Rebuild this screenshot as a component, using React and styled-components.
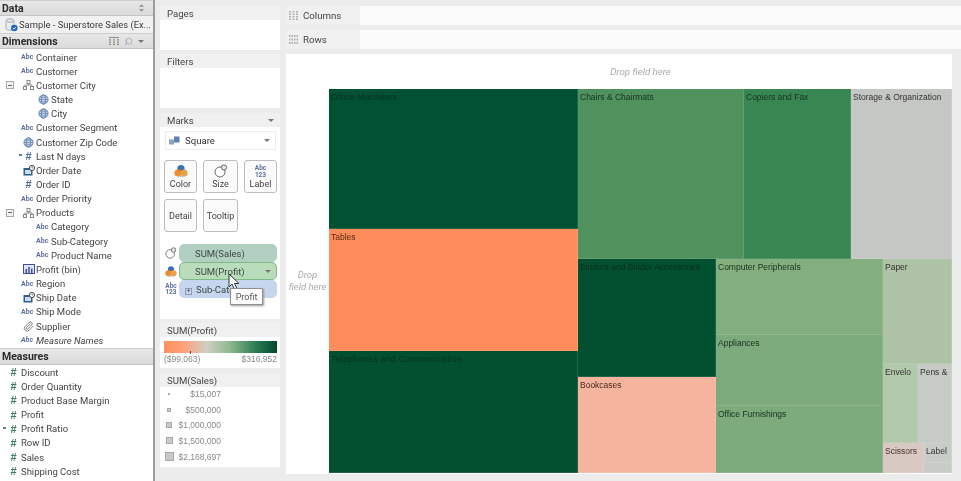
import React from "react";
import styled, { createGlobalStyle } from "styled-components";
import { Paperclip, Search } from "lucide-react";

const GlobalStyle = createGlobalStyle`
  html, body { margin: 0; padding: 0; background: #ececec; overflow: hidden; }
  * { box-sizing: border-box; }
`;

const dimensions = [
  { name: "Container", icon: "abc" },
  { name: "Customer", icon: "abc" },
  { name: "Customer City", icon: "tree", toggle: true },
  { name: "State", icon: "globe", nested: true },
  { name: "City", icon: "globe", nested: true },
  { name: "Customer Segment", icon: "abc" },
  { name: "Customer Zip Code", icon: "globe" },
  { name: "Last N days", icon: "hashBlue", calc: true },
  { name: "Order Date", icon: "date" },
  { name: "Order ID", icon: "hashBlue" },
  { name: "Order Priority", icon: "abc" },
  { name: "Products", icon: "tree", toggle: true },
  { name: "Category", icon: "abc", nested: true },
  { name: "Sub-Category", icon: "abc", nested: true },
  { name: "Product Name", icon: "abc", nested: true },
  { name: "Profit (bin)", icon: "bin" },
  { name: "Region", icon: "abc" },
  { name: "Ship Date", icon: "date" },
  { name: "Ship Mode", icon: "abc" },
  { name: "Supplier", icon: "clip" },
  { name: "Measure Names", icon: "abc", italic: true },
];

const measures = [
  { name: "Discount" },
  { name: "Order Quantity" },
  { name: "Product Base Margin" },
  { name: "Profit" },
  { name: "Profit Ratio", calc: true },
  { name: "Row ID" },
  { name: "Sales" },
  { name: "Shipping Cost" },
];

const sizes = [
  { label: "$15,007", box: 2 },
  { label: "$500,000", box: 4 },
  { label: "$1,000,000", box: 6 },
  { label: "$1,500,000", box: 7 },
  { label: "$2,168,697", box: 9 },
];

const Page = styled.div`
  width: 961px;
  height: 481px;
  display: flex;
  background: #ececec;
  font-family: Roboto, "Open Sans", sans-serif;
  color: #333;
  overflow: hidden;
  filter: blur(0.35px);
`;

const Sidebar = styled.aside`
  width: 155px;
  height: 481px;
  flex: none;
  background: #fff;
  border-right: 2px solid #9c9c9c;
  display: flex;
  flex-direction: column;
`;

const SideHeader = styled.div`
  height: ${(p) => p.$h}px;
  flex: none;
  display: flex;
  align-items: center;
  justify-content: space-between;
  padding: 0 9px 0 2px;
  background: linear-gradient(#e8e8e8, #dadada);
  border-top: 1px solid #cfcfcf;
  border-bottom: 1px solid #c4c4c4;
  font-size: 10.5px;
  font-weight: 700;
  color: #2b2b2b;
`;

const HeaderTools = styled.span`
  display: flex;
  align-items: center;
  gap: 5px;
  color: #8a8a8a;
`;

const FlippedSearch = styled(Search)`
  transform: scaleX(-1);
`;

const Source = styled.div`
  height: 17px;
  flex: none;
  display: flex;
  align-items: center;
  gap: 1px;
  padding-left: 5px;
  background: #f1f1f1;
  font-size: 9.4px;
  color: #3a3a3a;
  white-space: nowrap;
  overflow: hidden;

  svg {
    flex: none;
  }
`;

const FieldList = styled.div`
  display: flex;
  flex-direction: column;
  padding-top: ${(p) => p.$top}px;
  height: ${(p) => p.$h}px;
  flex: none;
  overflow: hidden;
`;

const Field = styled.div`
  height: 14.16px;
  flex: none;
  display: flex;
  align-items: center;
  padding-left: ${(p) => (p.$nested ? 36 : 21)}px;
  font-size: 9.5px;
  font-style: ${(p) => (p.$italic ? "italic" : "normal")};
  color: #444;
  white-space: nowrap;
  position: relative;
`;

const MeasureField = styled(Field)`
  padding-left: 6px;
`;

const IconSlot = styled.span`
  width: 15px;
  height: 12px;
  flex: none;
  display: flex;
  align-items: center;
  justify-content: ${(p) => (p.$left ? "flex-start" : "center")};
  position: relative;
`;

const AbcTag = styled.span`
  font-size: 7px;
  font-weight: 700;
  color: #5f6f9e;
`;

const Hash = styled.span`
  font-family: "Liberation Sans", sans-serif;
  font-size: 11px;
  font-weight: 700;
  color: ${(p) => (p.$blue ? "#4c6f9c" : "#3f7d61")};
`;

const CalcMark = styled.span`
  position: absolute;
  left: ${(p) => p.$left}px;
  top: 5px;
  width: 3px;
  height: 2px;
  background: #5d7f93;
`;

const Toggle = styled.span`
  position: absolute;
  left: 6px;
  top: 3px;
  width: 8px;
  height: 8px;
  border: 1px solid #aaa;
  background: #f2f2f2;
  &::after {
    content: "";
    position: absolute;
    left: 1px;
    top: 2.5px;
    width: 4px;
    height: 1px;
    background: #666;
  }
`;

const Shelves = styled.section`
  width: 131px;
  flex: none;
  display: flex;
  flex-direction: column;
  padding: 6px 0 0 5px;
`;

const Card = styled.div`
  width: 120px;
  height: ${(p) => p.$h}px;
  margin-bottom: ${(p) => p.$gap}px;
  flex: none;
  background: #fff;
  display: flex;
  flex-direction: column;
  position: relative;
`;

const CardTitle = styled.div`
  height: 14px;
  flex: none;
  background: #f0f0f0;
  display: flex;
  align-items: center;
  justify-content: space-between;
  padding: 0 6px 0 7px;
  font-size: 9.6px;
  color: #444;
`;

const Caret = styled.span`
  width: 0;
  height: 0;
  border-left: 3px solid transparent;
  border-right: 3px solid transparent;
  border-top: 3px solid #777;
`;

const MarkSelect = styled.div`
  margin: 4px 4px 0 5px;
  height: 19px;
  flex: none;
  background: #fff;
  border: 1px solid #ececec;
  display: flex;
  align-items: center;
  justify-content: space-between;
  padding: 0 5px 0 3px;
  font-size: 9.6px;
`;

const SelectLabel = styled.span`
  display: flex;
  align-items: center;
  gap: 5px;
`;

const MarkGrid = styled.div`
  display: grid;
  grid-template-columns: 33px 35px 33px;
  grid-auto-rows: 33px;
  column-gap: 6px;
  row-gap: 6px;
  margin: 10px 0 0 4px;
`;

const MarkButton = styled.div`
  border: 1px solid #bdbdbd;
  border-radius: 3px;
  background: #fbfbfb;
  display: flex;
  flex-direction: column;
  align-items: center;
  justify-content: ${(p) => (p.$plain ? "center" : "flex-end")};
  padding-bottom: ${(p) => (p.$plain ? 0 : 3)}px;
  font-size: 9px;
  color: #444;
  gap: 1px;
`;

const MarkStack = styled.div`
  display: flex;
  flex-direction: column;
  margin-top: 12px;
`;

const PillRow = styled.div`
  height: 18px;
  display: flex;
  align-items: center;
  padding: 0 3px 0 5px;
  gap: 2px;
`;

const PillIcon = styled.span`
  width: 12px;
  height: 14px;
  flex: none;
  display: flex;
  align-items: center;
  justify-content: center;
`;

const Pill = styled.div`
  flex: 1;
  height: 17.5px;
  border-radius: 5px;
  background: ${(p) => p.$bg};
  border: 1px solid ${(p) => p.$line || p.$bg};
  display: flex;
  align-items: center;
  justify-content: space-between;
  padding: 0 5px 0 ${(p) => p.$pad}px;
  font-size: 9.5px;
  color: #3d4a44;
  white-space: nowrap;
  overflow: hidden;
`;

const Plus = styled.span`
  width: 7px;
  height: 7px;
  border: 1px solid #8d9ab5;
  font-size: 7px;
  line-height: 5px;
  text-align: center;
  margin-right: 4px;
  display: inline-block;
`;

const Tooltip = styled.div`
  position: absolute;
  left: 70px;
  top: 175px;
  width: 33px;
  height: 17px;
  background: #fdfdfd;
  border: 1px solid #8f8f8f;
  box-shadow: 1px 1px 2px #9a9a9a;
  font-size: 9px;
  color: #555;
  display: flex;
  align-items: center;
  justify-content: center;
`;

const CursorArrow = styled.svg`
  position: absolute;
  left: 68px;
  top: 160px;
`;

const Gradient = styled.div`
  height: 12px;
  margin: 4px 3px 0 4px;
  background: linear-gradient(90deg, #ff8f5f 0%, #ffa27c 18%, #cfcfc4 38%, #8fba8f 58%, #2f8056 80%, #00482c 100%);
  position: relative;
`;

const Tick = styled.span`
  position: absolute;
  left: 26px;
  bottom: -1px;
  width: 1px;
  height: 3px;
  background: #555;
`;

const RangeRow = styled.div`
  display: flex;
  justify-content: space-between;
  margin: 1px 3px 0 4px;
  font-family: "Liberation Sans", sans-serif;
  font-size: 8.5px;
  color: #8a8a8a;
`;

const SizeList = styled.div`
  margin-top: -1px;
`;

const SizeRow = styled.div`
  height: 15.7px;
  display: grid;
  grid-template-columns: 10px 47px;
  padding-left: 4px;
  align-items: center;
  font-family: "Liberation Sans", sans-serif;
  font-size: 8.5px;
  color: #8a8a8a;
  text-align: right;
`;

const SizeSwatch = styled.span`
  justify-self: center;
  width: ${(p) => p.$box}px;
  height: ${(p) => p.$box}px;
  background: #c9c9c9;
  border: 1px solid #a8a8a8;
`;

const Main = styled.main`
  flex: 1;
  display: flex;
  flex-direction: column;
  padding-top: 6px;
  min-width: 0;
`;

const Shelf = styled.div`
  height: 19px;
  margin-bottom: 5px;
  flex: none;
  display: flex;
  background: #fbfbfb;
`;

const ShelfLabel = styled.div`
  width: 74px;
  flex: none;
  background: #f0f0f0;
  display: flex;
  align-items: center;
  gap: 5px;
  padding-left: 3px;
  font-size: 9.7px;
  color: #444;
`;

const Viz = styled.div`
  width: 666px;
  height: 420px;
  flex: none;
  background: #fff;
  display: grid;
  grid-template-columns: 43px 623px;
  grid-template-rows: 35px 384px;
`;

const ColDrop = styled.div`
  grid-column: 2;
  display: flex;
  align-items: center;
  justify-content: center;
  font-size: 9.7px;
  font-style: italic;
  color: #aaa;
`;

const RowDrop = styled.div`
  grid-row: 2;
  display: flex;
  align-items: center;
  justify-content: center;
  text-align: center;
  font-size: 9.5px;
  line-height: 12px;
  font-style: italic;
  color: #aaa;
`;

const Treemap = styled.div`
  grid-row: 2;
  grid-column: 2;
  display: flex;
`;

const Stack = styled.div`
  display: flex;
  flex-direction: ${(p) => (p.$row ? "row" : "column")};
  flex: ${(p) => (p.$size ? `0 0 ${p.$size}px` : "1")};
  min-width: 0;
  min-height: 0;
`;

const Tile = styled.div`
  flex: ${(p) => (p.$size ? `0 0 ${p.$size}px` : "1")};
  min-width: 0;
  min-height: 0;
  background: ${(p) => p.$bg};
  border-right: 1px solid rgba(255, 255, 255, 0.12);
  border-bottom: 1px solid rgba(255, 255, 255, 0.12);
  padding: 3px 0 0 2px;
  font-family: "Liberation Sans", sans-serif;
  font-size: 8.5px;
  line-height: 10px;
  letter-spacing: ${(p) => (p.$wide ? "0.35px" : "0")};
  color: ${(p) => p.$ink || "#17301f"};
  white-space: nowrap;
  overflow: hidden;
`;

function GlobeIcon() {
  return (
    <svg width="11" height="11" viewBox="0 0 12 12" fill="#c5d3ea" stroke="#6582ad" strokeWidth="1">
      <circle cx="6" cy="6" r="5" />
      <ellipse cx="6" cy="6" rx="2.3" ry="5" fill="none" />
      <path d="M1 6h10M1.8 3.5h8.4M1.8 8.5h8.4" fill="none" strokeWidth="0.8" />
    </svg>
  );
}

function TreeIcon() {
  return (
    <svg width="11" height="10" viewBox="0 0 11 10" fill="none" stroke="#888" strokeWidth="1">
      <rect x="4" y="0.5" width="3" height="3" />
      <rect x="0.5" y="6.5" width="3" height="3" />
      <rect x="7.5" y="6.5" width="3" height="3" />
      <path d="M5.5 3.5v1.5M2 6.5V5h7v1.5" />
    </svg>
  );
}

function DateIcon() {
  return (
    <svg width="12" height="11" viewBox="0 0 12 11">
      <rect x="0.5" y="3" width="9" height="7.5" fill="#2f5d8c" />
      <rect x="2" y="5" width="6" height="4" fill="#cfdcec" />
      <circle cx="9" cy="3" r="2.6" fill="#fff" stroke="#444" strokeWidth="1" />
      <path d="M9 1.7V3h1.1" stroke="#444" strokeWidth="0.7" fill="none" />
    </svg>
  );
}

function BinIcon() {
  return (
    <svg width="12" height="10" viewBox="0 0 12 10">
      <rect x="0.5" y="0.5" width="11" height="9" fill="#dfe4f6" stroke="#3f4f98" />
      <path d="M2.5 9V5H4v4zM5.2 9V3h1.5v6zM8 9V4.5h1.5V9z" fill="#3f4f98" />
    </svg>
  );
}

function FieldIcon({ type }) {
  if (type === "abc") return <AbcTag>Abc</AbcTag>;
  if (type === "globe") return <GlobeIcon />;
  if (type === "tree") return <TreeIcon />;
  if (type === "date") return <DateIcon />;
  if (type === "bin") return <BinIcon />;
  if (type === "clip") return <Paperclip size={11} color="#666" strokeWidth={1.8} />;
  return <Hash $blue>#</Hash>;
}

function ColorIcon({ size = 14 }) {
  return (
    <svg width={size} height={size} viewBox="0 0 14 14">
      <circle cx="7" cy="4.5" r="3.6" fill="#3f6fb0" />
      <circle cx="4" cy="9" r="3.6" fill="#ee8a2c" />
      <circle cx="10" cy="9" r="3.6" fill="#e7a24a" />
      <path d="M3.5 12.5h7" stroke="#c9c6bb" strokeWidth="1.4" />
    </svg>
  );
}

function SizeIcon({ size = 14 }) {
  return (
    <svg width={size} height={size} viewBox="0 0 14 14" fill="none" stroke="#666" strokeWidth="1">
      <circle cx="6" cy="8" r="5" fill="#fff" />
      <circle cx="10" cy="3.5" r="2.6" fill="#e6e6e6" />
    </svg>
  );
}

const LabelGlyph = styled.span`
  display: flex;
  flex-direction: column;
  align-items: center;
  font-size: 6.5px;
  line-height: 6.5px;
  color: #5f6f9e;
  font-weight: 700;
`;

function ColumnsIcon() {
  return (
    <svg width="9" height="10" viewBox="0 0 9 10" stroke="#b0b0b0" strokeWidth="2" strokeDasharray="1.5 1">
      <path d="M1 0v10M4.5 0v10M8 0v10" />
    </svg>
  );
}

function RowsIcon() {
  return (
    <svg width="9" height="9" viewBox="0 0 9 9" stroke="#b0b0b0" strokeWidth="2" strokeDasharray="1.5 1">
      <path d="M0 1h9M0 4.5h9M0 8h9" />
    </svg>
  );
}

function SourceIcon() {
  return (
    <svg width="13" height="14" viewBox="0 0 13 14">
      <path d="M1 2.5v8c0 1 1.8 1.8 4 1.8s4-.8 4-1.800v-8" fill="#e9ecef" stroke="#9aa3ad" strokeWidth="0.8" />
      <ellipse cx="5" cy="2.5" rx="4" ry="1.8" fill="#dfe3e8" stroke="#9aa3ad" strokeWidth="0.8" />
      <circle cx="9.3" cy="10" r="3.3" fill="#2467b3" />
      <path d="M7.8 10L9 11.200l1.800-2.200" fill="none" stroke="#fff" strokeWidth="0.8" />
    </svg>
  );
}

function SquareMarkIcon() {
  return (
    <svg width="11" height="9" viewBox="0 0 11 9">
      <rect x="0" y="3.5" width="5" height="5" fill="#8ba3c4" />
      <rect x="5" y="0.5" width="5.5" height="6" fill="#5f82b3" />
    </svg>
  );
}

export default function App() {
  return (
    <Page>
      <GlobalStyle />
      <Sidebar>
        <SideHeader $h={16}>
          Data
          <HeaderTools>
            <svg width="5" height="8" viewBox="0 0 5 8" fill="#999">
              <path d="M2.5 0L5 3H0zM2.5 8L0 5h5z" />
            </svg>
          </HeaderTools>
        </SideHeader>
        <Source>
          <SourceIcon />
          Sample - Superstore Sales (Ex...
        </Source>
        <SideHeader $h={16}>
          Dimensions
          <HeaderTools>
            <svg width="10" height="8" viewBox="0 0 10 8" fill="#8a8a8a">
              <path d="M0 0h10v1H0zM0 2.3h2v1.2H0zM4 2.3h2v1.2H4zM8 2.3h2v1.2H8zM0 4.5h2v1.2H0zM4 4.5h2v1.2H4zM8 4.5h2v1.2H8zM0 6.8h2V8H0zM4 6.8h2V8H4zM8 6.8h2V8H8z" />
            </svg>
            <FlippedSearch size={9} strokeWidth={1.6} color="#7d93b5" />
            <Caret />
          </HeaderTools>
        </SideHeader>
        <FieldList $top={1} $h={299}>
          {dimensions.map((f) => (
            <Field key={f.name} $nested={f.nested} $italic={f.italic}>
              {f.toggle && <Toggle />}
              {f.calc && <CalcMark $left={19} />}
              <IconSlot $left={f.icon === "abc"}>
                <FieldIcon type={f.icon} />
              </IconSlot>
              {f.name}
            </Field>
          ))}
        </FieldList>
        <SideHeader $h={17}>Measures</SideHeader>
        <FieldList $top={0} $h={115}>
          {measures.map((f) => (
            <MeasureField key={f.name}>
              {f.calc && <CalcMark $left={3} />}
              <IconSlot>
                <Hash>#</Hash>
              </IconSlot>
              {f.name}
            </MeasureField>
          ))}
        </FieldList>
      </Sidebar>

      <Shelves>
        <Card $h={44} $gap={4}>
          <CardTitle>Pages</CardTitle>
        </Card>
        <Card $h={54} $gap={5}>
          <CardTitle>Filters</CardTitle>
        </Card>
        <Card $h={206} $gap={4}>
          <CardTitle>
            Marks
            <Caret />
          </CardTitle>
          <MarkSelect>
            <SelectLabel>
              <SquareMarkIcon />
              Square
            </SelectLabel>
            <Caret />
          </MarkSelect>
          <MarkGrid>
            <MarkButton>
              <ColorIcon />
              Color
            </MarkButton>
            <MarkButton>
              <SizeIcon />
              Size
            </MarkButton>
            <MarkButton>
              <LabelGlyph>
                <span>Abc</span>
                <span>123</span>
              </LabelGlyph>
              Label
            </MarkButton>
            <MarkButton $plain>Detail</MarkButton>
            <MarkButton $plain>Tooltip</MarkButton>
          </MarkGrid>
          <MarkStack>
            <PillRow>
              <PillIcon>
                <SizeIcon size={12} />
              </PillIcon>
              <Pill $bg="#b2d0c2" $pad={15}>
                SUM(Sales)
              </Pill>
            </PillRow>
            <PillRow>
              <PillIcon>
                <ColorIcon size={13} />
              </PillIcon>
              <Pill $bg="#b9dcba" $line="#7fb98a" $pad={15}>
                SUM(Profit)
                <Caret />
              </Pill>
            </PillRow>
            <PillRow>
              <PillIcon>
                <LabelGlyph>
                  <span>Abc</span>
                  <span>123</span>
                </LabelGlyph>
              </PillIcon>
              <Pill $bg="#c6d6ef" $pad={5}>
                <span>
                  <Plus>+</Plus>
                  Sub-Category
                </span>
              </Pill>
            </PillRow>
          </MarkStack>
          <CursorArrow width="13" height="18" viewBox="0 0 13 18">
            <path d="M1 1v13l3-3 2.5 5.500 2.500-1-2.500-5H11z" fill="#fff" stroke="#333" strokeWidth="1" />
          </CursorArrow>
          <Tooltip>Profit</Tooltip>
        </Card>
        <Card $h={45} $gap={5}>
          <CardTitle>SUM(Profit)</CardTitle>
          <Gradient>
            <Tick />
          </Gradient>
          <RangeRow>
            <span>($99,063)</span>
            <span>$316,952</span>
          </RangeRow>
        </Card>
        <Card $h={94} $gap={0}>
          <CardTitle>SUM(Sales)</CardTitle>
          <SizeList>
            {sizes.map((s) => (
              <SizeRow key={s.label}>
                <SizeSwatch $box={s.box} />
                {s.label}
              </SizeRow>
            ))}
          </SizeList>
        </Card>
      </Shelves>

      <Main>
        <Shelf>
          <ShelfLabel>
            <ColumnsIcon />
            Columns
          </ShelfLabel>
        </Shelf>
        <Shelf>
          <ShelfLabel>
            <RowsIcon />
            Rows
          </ShelfLabel>
        </Shelf>
        <Viz>
          <ColDrop>Drop field here</ColDrop>
          <RowDrop>
            Drop
            <br />
            field here
          </RowDrop>
          <Treemap>
            <Stack $size={249}>
              <Tile $size={140} $bg="#005233" $ink="#06301c" $wide>Office Machines</Tile>
              <Tile $size={122} $bg="#ff8d5c" $ink="#5a2a12">Tables</Tile>
              <Tile $bg="#02502f" $ink="#06301c" $wide>Telephones and Communication</Tile>
            </Stack>
            <Stack>
              <Stack $row $size={170}>
                <Tile $size={166} $bg="#4f925e">Chairs &amp; Chairmats</Tile>
                <Tile $size={107} $bg="#388753">Copiers and Fax</Tile>
                <Tile $bg="#c5c7c4" $ink="#333">Storage &amp; Organization</Tile>
              </Stack>
              <Stack $row>
                <Stack $size={138}>
                  <Tile $size={118} $bg="#02502f" $ink="#06301c">Binders and Binder Accessories</Tile>
                  <Tile $bg="#f4b49d" $ink="#4a2a20">Bookcases</Tile>
                </Stack>
                <Stack $size={167}>
                  <Tile $size={76} $bg="#83af7f">Computer Peripherals</Tile>
                  <Tile $size={71} $bg="#7dab7d">Appliances</Tile>
                  <Tile $bg="#7dab7d">Office Furnishings</Tile>
                </Stack>
                <Stack>
                  <Tile $size={105} $bg="#aec3a5" $ink="#333">Paper</Tile>
                  <Stack $row $size={79}>
                    <Tile $size={35} $bg="#b2c9ab" $ink="#333">Envelo</Tile>
                    <Tile $bg="#c6cbc6" $ink="#333">Pens &amp;</Tile>
                  </Stack>
                  <Stack $row>
                    <Tile $size={41} $bg="#d8c9c3" $ink="#4a3030">Scissors</Tile>
                    <Stack>
                      <Tile $size={20} $bg="#c8cdc8" $ink="#333">Label</Tile>
                      <Tile $bg="#c8ccc6" />
                    </Stack>
                  </Stack>
                </Stack>
              </Stack>
            </Stack>
          </Treemap>
        </Viz>
      </Main>
    </Page>
  );
}
